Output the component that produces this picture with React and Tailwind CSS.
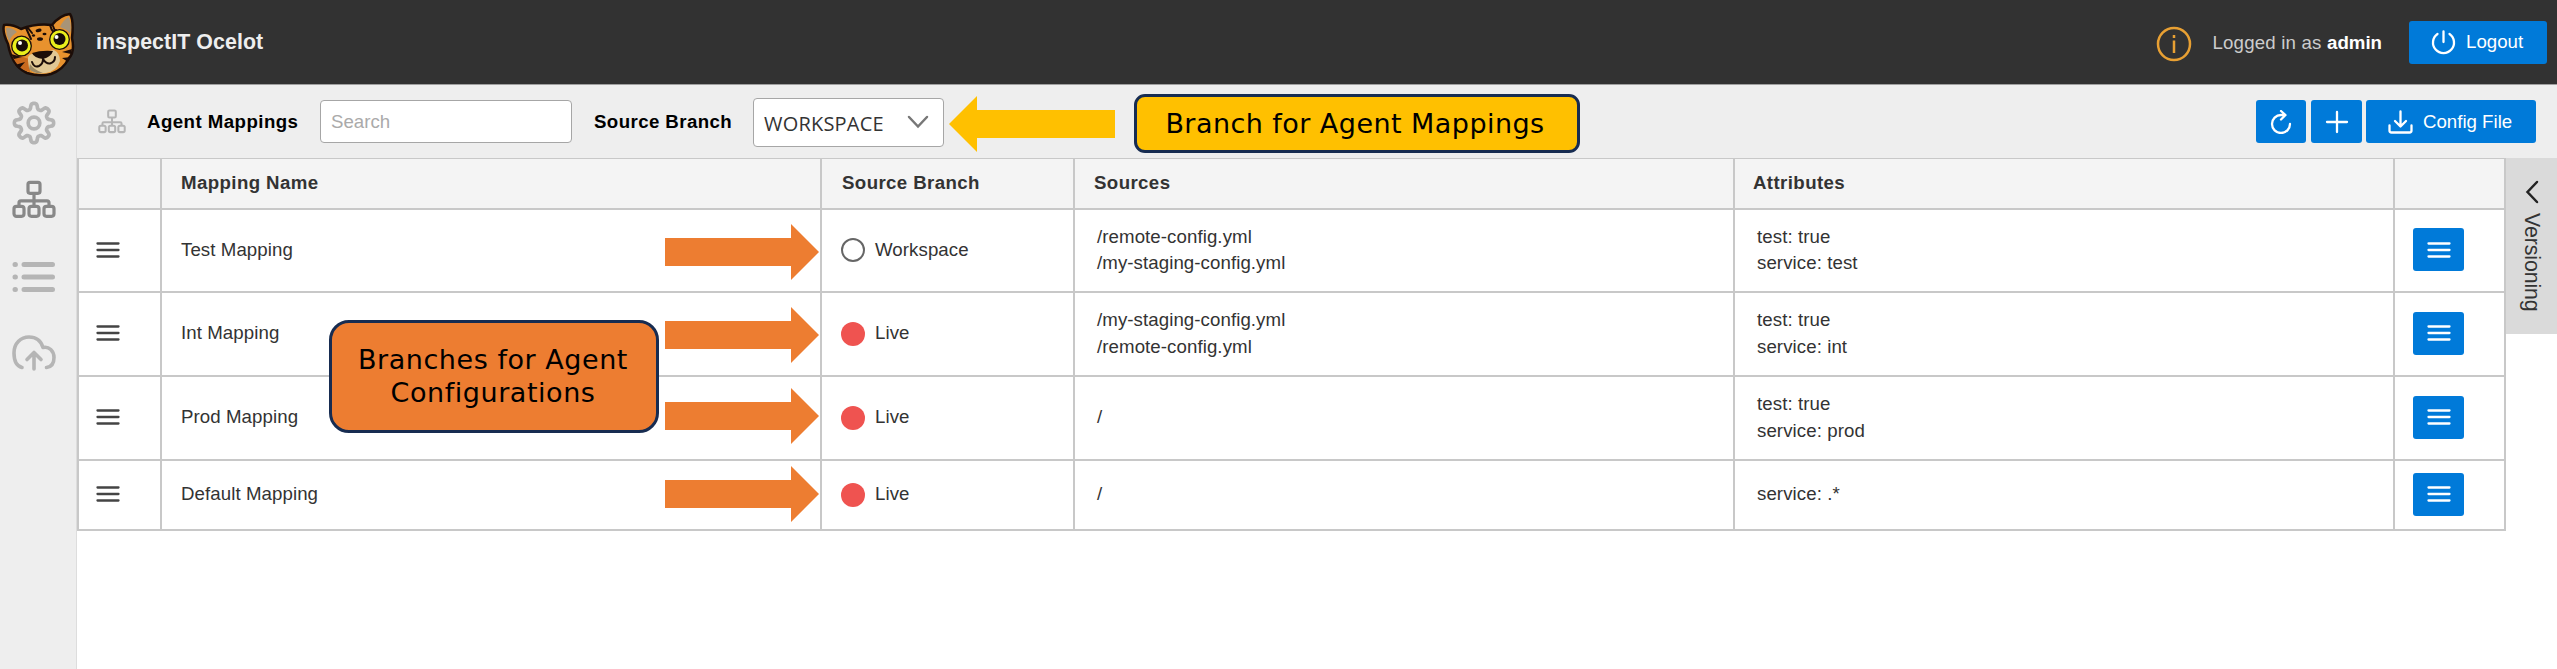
import React from "react";

const rows = [
  { name: "Test Mapping", live: false, branch: "Workspace", sources: ["/remote-config.yml", "/my-staging-config.yml"], attrs: ["test: true", "service: test"], h: "h-[83px]" },
  { name: "Int Mapping", live: true, branch: "Live", sources: ["/my-staging-config.yml", "/remote-config.yml"], attrs: ["test: true", "service: int"], h: "h-[84px]" },
  { name: "Prod Mapping", live: true, branch: "Live", sources: ["/"], attrs: ["test: true", "service: prod"], h: "h-[84px]" },
  { name: "Default Mapping", live: true, branch: "Live", sources: ["/"], attrs: ["service: .*"], h: "h-[70px]" },
];

const GRID = "grid grid-cols-[83px_660px_253px_660px_660px_111px]";
const CELL = "flex items-center border-r-2 border-b-2 border-[#c8c8c8] pb-px";

function Bars({ className }) {
  return (
    <svg className={className} width="24" height="18" viewBox="0 0 24 18" stroke="currentColor" strokeWidth="2.3" strokeLinecap="round">
      <path d="M1.5 2.5h21M1.5 9h21M1.5 15.5h21" />
    </svg>
  );
}

function Sitemap({ size, className }) {
  return (
    <svg className={className} width={size} height={size * 0.88} viewBox="0 0 44 38" fill="none" stroke="currentColor" strokeWidth="3.2">
      <rect x="16" y="2" width="12" height="11" rx="2" />
      <rect x="2" y="26" width="10" height="10" rx="2.5" />
      <rect x="17" y="26" width="10" height="10" rx="2.5" />
      <rect x="32" y="26" width="10" height="10" rx="2.5" />
      <path d="M22 13v13M7 26v-3.500q0-2 2-2h26q2 0 2 2V26" />
    </svg>
  );
}

function Gear() {
  const pts = [];
  for (let i = 0; i <= 160; i++) {
    const a = (i / 160) * Math.PI * 2;
    const r = 16.8 + 2.9 * Math.tanh(2 * Math.cos(8 * a));
    pts.push(`${(22 + r * Math.cos(a)).toFixed(2)} ${(22 + r * Math.sin(a)).toFixed(2)}`);
  }
  return (
    <svg width="44" height="44" viewBox="0 0 44 44" fill="none" stroke="currentColor" strokeWidth="3.700" strokeLinejoin="round">
      <path d={`M${pts.join("L")}Z`} />
      <circle cx="22" cy="22" r="5.800" />
    </svg>
  );
}

function Ocelot() {
  return (
    <svg width="76" height="76" viewBox="0 0 76 76" className="-mt-1 shrink-0" strokeLinejoin="round" strokeLinecap="round">
      <g transform="translate(0 2)">
        <path d="M4 21Q12 20 21 25Q36 19 52 21Q60 11 70 10Q74 16 72 34Q75 48 69 54Q63 66 51 70Q40 73 27 69Q16 64 11 51Q9 46 8 40Q2 28 4 21Z" fill="#e8922e" stroke="#1c0d08" strokeWidth="2.500" />
        <path d="M6 24Q11 23 17 28Q12 31 9 37Q6 31 6 24Z" fill="#a89478" />
        <path d="M69 13Q72 23 70 29Q66 25 60 23Q63 16 69 13Z" fill="#a89478" />
        <path d="M12 51Q18 66 30 68L29 55L20 52Z" fill="#c96a1e" />
        <path d="M28 57Q27 51 32 50L54 46Q60 49 60 57Q57 67 46 69Q33 71 29 64Z" fill="#e2c894" />
        <path d="M30 60Q34 66 43 69Q34 70 29 65Z" fill="#9c8a66" />
        <path d="M26 24L31 35M28 24L32 29M50 21Q51 26 55 30L56 26M53 22L55 27" stroke="#1c0d08" strokeWidth="2" fill="none" />
        <g fill="#1c0d08">
          <ellipse cx="38.500" cy="26.500" rx="3" ry="1.700" transform="rotate(-12 38 26)" />
          <ellipse cx="44.500" cy="30" rx="2" ry="1.300" />
          <ellipse cx="33.500" cy="31.500" rx="1.600" ry="1.200" />
          <ellipse cx="40" cy="35" rx="3" ry="1.800" />
          <path d="M32 49Q41 46 53 47Q51 53 43 55Q34 54 32 49Z" />
          <path d="M11 50L22 53L14 55ZM15 61L25 58L19 65ZM72 45L62 48L71 50ZM71 53L62 54L68 58Z" />
        </g>
        <g strokeWidth="1.300" stroke="#1c0d08">
          <circle cx="21.500" cy="42" r="9.800" fill="#e9ee1c" />
          <circle cx="59.500" cy="35.500" r="9.800" fill="#e9ee1c" />
        </g>
        <circle cx="22" cy="41.500" r="6" fill="#160c08" />
        <circle cx="59.500" cy="35" r="6" fill="#160c08" />
        <circle cx="20" cy="39" r="2" fill="#fff" />
        <circle cx="56.500" cy="33" r="2" fill="#fff" />
        <path d="M32 58Q34 64 39 62Q43 60 43 55Q46 60 50 59.500Q55 58 55 53" fill="none" stroke="#1c0d08" strokeWidth="2" />
      </g>
    </svg>
  );
}

function RightArrow({ className }) {
  return (
    <svg className={className} width="154" height="56" viewBox="0 0 154 56">
      <path d="M0 14H126V0L154 28L126 56V42H0Z" fill="#ed7d31" />
    </svg>
  );
}

export default function App() {
  return (
    <div className="relative flex h-[669px] w-[2557px] flex-col overflow-hidden bg-white font-['Liberation_Sans',Arial,sans-serif] text-[18.67px] text-[#333]">
      <header className="flex h-[85px] shrink-0 items-center border-b border-[#a0a0a0] bg-[#323232]">
        <Ocelot />
        <div className="ml-5 flex-1 pt-0.5 text-[21.33px] font-bold tracking-[0.08px] text-[#eee]">inspectIT Ocelot</div>
        <svg width="36" height="36" viewBox="0 0 36 36" fill="none" stroke="#e8a033" strokeWidth="2.500" className="mt-1 shrink-0">
          <circle cx="18" cy="18" r="16" />
          <path d="M18 14.500V27M18 9V12" />
        </svg>
        <div className="ml-5 pt-px text-[#ccc]"><span className="tracking-[0.2px]">Logged in as </span><b className="text-white">admin</b></div>
        <button className="mr-[10px] ml-[27px] flex h-[43px] w-[138px] items-center gap-2.5 rounded-[3px] bg-[#007ad9] pl-[22px] text-white">
          <svg width="25" height="25" viewBox="0 0 25 25" fill="none" stroke="currentColor" strokeWidth="2.300" strokeLinecap="round">
            <path d="M12.500 1.500V12M6.500 4A10.500 10.500 0 1 0 18.500 4" />
          </svg>
          Logout
        </button>
      </header>

      <div className="flex min-h-0 flex-1">
        <nav className="flex w-[77px] shrink-0 flex-col items-center border-r border-[#ddd] bg-[#eee] pr-2 text-[#b5b5b5]">
          <div className="mt-4 h-[77px]"><Gear /></div>
          <div className="h-[80px] pt-0.5 text-[#888]"><Sitemap size={44} /></div>
          <div className="h-[77px] pt-[3px]">
            <svg width="44" height="32" viewBox="0 0 44 32" stroke="currentColor" strokeWidth="5" strokeLinecap="round">
              <path d="M3 3.500h.4M12 3.500h28.500M3 16h.4M12 16h28.500M3 28.500h.4M12 28.500h28.500" />
            </svg>
          </div>
          <svg width="44" height="36" viewBox="0 0 44 36" fill="none" stroke="currentColor" strokeWidth="3.600" strokeLinecap="round" strokeLinejoin="round">
            <path d="M10 32.500C4 31 2 26 2 18C2 8 9 2 17 2C24 2 29 6 31 12.500C37 11 42 16 42 22.500C42 29 39 32 34.500 32.500M22 34V18.500M15 24.500L22 17.500L29 24.500" />
          </svg>
        </nav>

        <main className="flex min-w-0 flex-1 flex-col">
          <div className="flex h-[73px] shrink-0 items-center bg-[#eee]">
            <div className="ml-[21px] text-[#b5b5b5]"><Sitemap size={28} /></div>
            <div className="ml-[21px] w-[173px] font-bold tracking-[0.45px] text-black">Agent Mappings</div>
            <div className="flex h-[43px] w-[252px] items-center rounded-[4px] border border-[#a6a6a6] bg-white pl-[10px] text-[#aaa]">Search</div>
            <div className="ml-[22px] w-[159px] font-bold tracking-[0.42px] text-black">Source Branch</div>
            <div className="mt-0.5 flex h-[49px] w-[191px] items-center justify-between rounded-[4px] border border-[#a6a6a6] bg-white pt-[3px] pr-[14px] pl-[10px] font-['Open_Sans',sans-serif] text-[20px] tracking-[0.2px] text-[#333]">
              WORKSPACE
              <svg width="22" height="14" viewBox="0 0 22 14" fill="none" stroke="#777" strokeWidth="2.500" strokeLinecap="round" className="-mt-1"><path d="M2 2L11 11.500L20 2" /></svg>
            </div>
            <svg width="166" height="56" viewBox="0 0 166 56" className="mt-1 ml-[5px]"><path d="M166 14H28V0L0 28L28 56V42H166Z" fill="#ffc000" /></svg>
            <div className="mt-1 ml-[19px] flex h-[59px] w-[446px] items-center justify-center rounded-[11px] border-3 border-[#172c51] bg-[#ffc000] pt-0.5 pr-1 font-['DejaVu_Sans',sans-serif] text-[27px] tracking-[0.45px] text-black">Branch for Agent Mappings</div>
            <div className="mr-[21px] ml-auto flex gap-[5px] text-white">
              <button className="flex h-[43px] w-[50px] items-center justify-center rounded-[3px] bg-[#007ad9]">
                <svg width="22" height="24" viewBox="0 0 22 24" fill="none" stroke="currentColor" strokeWidth="2.300" strokeLinecap="round" strokeLinejoin="round">
                  <path d="M20 14A9 9 0 1 1 11 5H15M11 1L15.500 5L11 9.500" />
                </svg>
              </button>
              <button className="flex h-[43px] w-[51px] items-center justify-center rounded-[3px] bg-[#007ad9]">
                <svg width="24" height="24" viewBox="0 0 24 24" stroke="currentColor" strokeWidth="2.300" strokeLinecap="round"><path d="M12 2V22M2 12H22" /></svg>
              </button>
              <button className="-ml-px flex h-[43px] w-[170px] items-center gap-2.5 rounded-[3px] bg-[#007ad9] pl-[22px]">
                <svg width="25" height="24" viewBox="0 0 25 24" fill="none" stroke="currentColor" strokeWidth="2.300" strokeLinecap="round" strokeLinejoin="round">
                  <path d="M12.500 1.500V16M7 11L12.500 16.500L18 11M1.500 15.500V20.500Q1.500 22.500 3.500 22.500H21.500Q23.500 22.500 23.500 20.500V15.500" />
                </svg>
                Config File
              </button>
            </div>
          </div>

          <div className="flex items-start">
            <div className="w-[2429px] shrink-0 border-t border-l-2 border-[#c8c8c8]">
              <div className={`${GRID} h-[51px] bg-[#f4f4f4] font-bold tracking-[0.4px]`}>
                <div className={CELL} />
                <div className={`${CELL} pl-[19px]`}>Mapping Name</div>
                <div className={`${CELL} pl-5`}>Source Branch</div>
                <div className={`${CELL} pl-[19px]`}>Sources</div>
                <div className={`${CELL} pl-[18px]`}>Attributes</div>
                <div className={CELL} />
              </div>
              {rows.map((r) => (
                <div key={r.name} className={`${GRID} ${r.h} leading-[26.5px] tracking-[0.08px]`}>
                  <div className={`${CELL} pl-[17px]`}><Bars className="-mt-px text-[#444]" /></div>
                  <div className={`${CELL} pl-[19px]`}>{r.name}</div>
                  <div className={`${CELL} gap-2.5 pl-[19px]`}>
                    <span className={`size-6 rounded-full ${r.live ? "bg-[#ef5350]" : "border-2 border-[#666]"}`} />
                    {r.branch}
                  </div>
                  <div className={`${CELL} pl-[22px]`}><div>{r.sources.map((s) => <div key={s}>{s}</div>)}</div></div>
                  <div className={`${CELL} pl-[22px]`}><div>{r.attrs.map((s) => <div key={s}>{s}</div>)}</div></div>
                  <div className={`${CELL} pl-[18px]`}>
                    <button className="-mt-px flex h-[43px] w-[51px] items-center justify-center rounded-[3px] bg-[#007ad9] text-white"><Bars /></button>
                  </div>
                </div>
              ))}
            </div>
            <aside className="flex h-[176px] flex-1 flex-col items-center bg-[#dadada] pt-[22px]">
              <svg width="14" height="24" viewBox="0 0 14 24" fill="none" stroke="#222" strokeWidth="2.500" strokeLinecap="round"><path d="M12 2L2.500 12L12 22" /></svg>
              <div className="mt-[9px] text-[21.33px] tracking-[-0.1px] [writing-mode:vertical-rl]">Versioning</div>
            </aside>
          </div>
        </main>
      </div>

      <RightArrow className="absolute top-[224px] left-[665px]" />
      <RightArrow className="absolute top-[307px] left-[665px]" />
      <RightArrow className="absolute top-[388px] left-[665px]" />
      <RightArrow className="absolute top-[466px] left-[665px]" />
      <div className="absolute top-[320px] left-[329px] flex h-[113px] w-[330px] items-center justify-center rounded-[20px] border-3 border-[#172c51] bg-[#ed7d31] pr-0.5 pb-px text-center font-['DejaVu_Sans',sans-serif] text-[27px] leading-[33px] tracking-[0.55px] text-black">
        Branches for Agent<br />Configurations
      </div>
    </div>
  );
}
